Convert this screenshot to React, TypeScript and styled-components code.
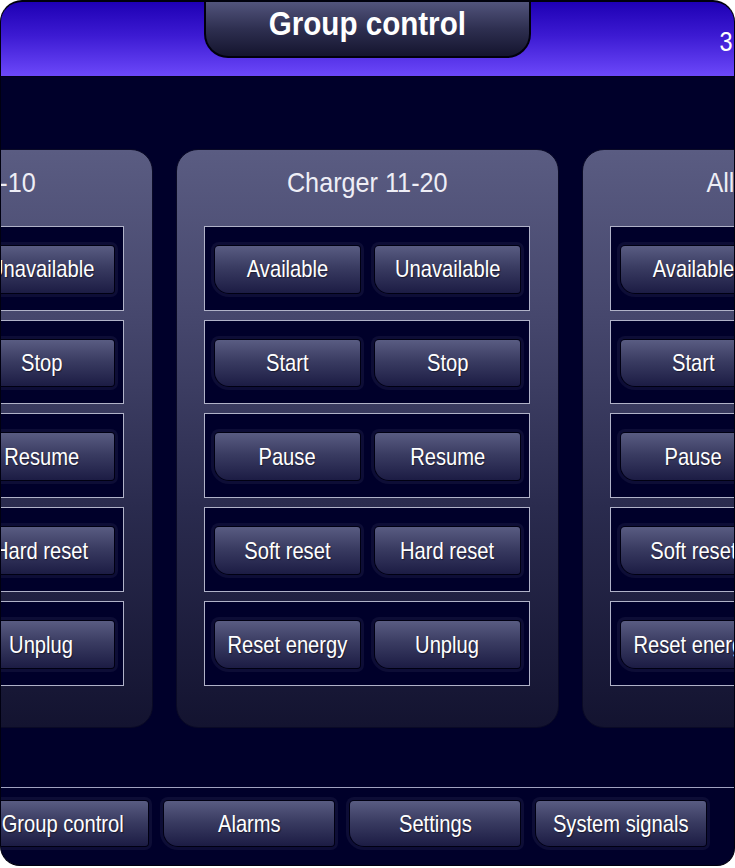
import React from "react";
import styled, { createGlobalStyle } from "styled-components";

const Global = createGlobalStyle`
  html, body { margin: 0; padding: 0; background: #ffffff; }
  body { font-family: "Liberation Sans", Arial, sans-serif; }
`;

const Frame = styled.div`
  width: 735px;
  height: 866px;
  box-sizing: border-box;
  border: 1px solid #000010;
  border-top: 2px solid #00000c;
  border-radius: 22px 22px 18px 20px;
  overflow: hidden;
  background: #00002a;
  display: flex;
  flex-direction: column;
`;

const Header = styled.header`
  height: 74px;
  flex-shrink: 0;
  display: grid;
  grid-template-columns: 1fr 327px 1fr;
  align-items: start;
  background: linear-gradient(180deg, #1e00b4 0%, #3c1ad2 45%, #6c48fa 100%);
  border-bottom: 1px solid #00001a;
`;

const TitleTab = styled.div`
  grid-column: 2;
  height: 56px;
  box-sizing: border-box;
  border: 2px solid #00000c;
  border-top: none;
  border-radius: 0 0 24px 24px;
  background: linear-gradient(180deg, #52547c 0%, #2e2f50 50%, #14142e 100%);
  display: flex;
  align-items: center;
  justify-content: center;
  padding-bottom: 12px;
  color: #ffffff;
  font-size: 34px;
  font-weight: 700;
`;

const Clock = styled.div`
  grid-column: 3;
  padding: 24px 0 0 186px;
  white-space: nowrap;
  overflow: hidden;
  color: #ffffff;
  font-size: 28px;
`;

const Label = styled.span<{ $scale?: number }>`
  display: inline-block;
  white-space: nowrap;
  transform: scaleX(${(p) => p.$scale ?? 0.84});
`;

const Main = styled.main`
  flex: 1;
  display: flex;
  flex-direction: column;
  padding-top: 72px;
`;

const CardsRow = styled.div`
  display: flex;
  justify-content: center;
  gap: 23px;
`;

const Card = styled.section`
  flex-shrink: 0;
  width: 383px;
  height: 579px;
  box-sizing: border-box;
  padding: 0 28px 41px 27px;
  border-radius: 22px;
  border: 1px solid #0a0a26;
  background: linear-gradient(180deg, #5a5c82 0%, #45466c 30%, #2a2b4e 62%, #131330 100%);
  display: flex;
  flex-direction: column;
  gap: 9px;
`;

const CardTitle = styled.h2`
  margin: 0;
  height: 67px;
  display: flex;
  align-items: center;
  justify-content: center;
  color: #eeeef6;
  font-size: 28px;
  font-weight: 400;
`;

const ControlRow = styled.div`
  height: 85px;
  box-sizing: border-box;
  border: 1px solid #b0b2c8;
  background: #00002a;
  display: grid;
  grid-template-columns: 1fr 1fr;
  gap: 15px;
  padding: 19px 9px 17px 10px;
`;

const Button = styled.button<{ $width?: number }>`
  width: ${(p) => (p.$width ? `${p.$width}px` : "auto")};
  flex-shrink: 0;
  border: none;
  margin: 0;
  padding: 0;
  border-radius: 4px 3px 3px 14px;
  background: linear-gradient(180deg, #595c82 0%, #3a3c62 45%, #1c1c44 100%);
  box-shadow: 0 0 0 1px #000012, 0 0 0 4px #0d0d36;
  color: #ffffff;
  font-family: "Liberation Sans", Arial, sans-serif;
  font-size: 24px;
  display: flex;
  align-items: center;
  justify-content: center;
  text-shadow: 1px 1px 1px rgba(0, 0, 0, 0.45);
  cursor: pointer;
`;

const Footer = styled.footer`
  margin-top: auto;
  border-top: 1px solid #a0a2c0;
  display: flex;
  justify-content: flex-end;
  gap: 16px;
  padding: 13px 28px 19px 0;
`;

const NavButton = styled(Button)`
  height: 45px;
`;

const rows: [string, string][] = [
  ["Available", "Unavailable"],
  ["Start", "Stop"],
  ["Pause", "Resume"],
  ["Soft reset", "Hard reset"],
  ["Reset energy", "Unplug"],
];

const cards = ["Charger 1-10", "Charger 11-20", "All chargers"];

const nav = ["Group control", "Alarms", "Settings", "System signals"];

export default function App() {
  return (
    <>
      <Global />
      <Frame>
        <Header>
          <TitleTab>
            <Label $scale={0.87}>Group control</Label>
          </TitleTab>
          <Clock>
            <Label>31</Label>
          </Clock>
        </Header>
        <Main>
          <CardsRow>
            {cards.map((c) => (
              <Card key={c}>
                <CardTitle>
                  <Label $scale={0.9}>{c}</Label>
                </CardTitle>
                {rows.map(([a, b]) => (
                  <ControlRow key={a}>
                    <Button>
                      <Label>{a}</Label>
                    </Button>
                    <Button>
                      <Label>{b}</Label>
                    </Button>
                  </ControlRow>
                ))}
              </Card>
            ))}
          </CardsRow>
          <Footer>
            {nav.map((n) => (
              <NavButton key={n} $width={170}>
                <Label>{n}</Label>
              </NavButton>
            ))}
          </Footer>
        </Main>
      </Frame>
    </>
  );
}
